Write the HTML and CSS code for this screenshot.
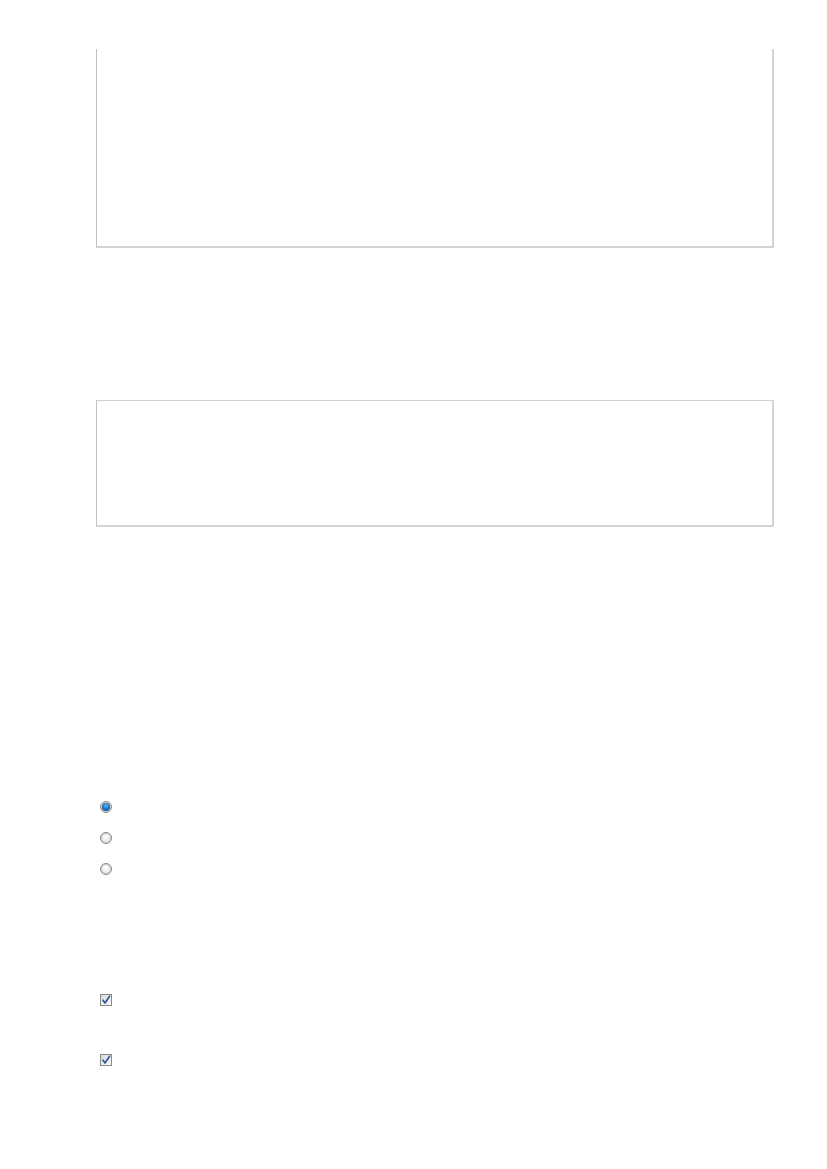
FILE: index.html
```html
<!DOCTYPE html>
<html>
<head>
<meta charset="utf-8">
<link rel="stylesheet" href="styles.css">
</head>
<body>
<div class="page">
  <div class="box box-top"></div>
  <div class="box box-mid"></div>
  <div class="radios">
    <div class="row"><span class="radio checked"><span class="dot"></span></span></div>
    <div class="row"><span class="radio"></span></div>
    <div class="row"><span class="radio"></span></div>
  </div>
  <div class="checks">
    <div class="crow"><span class="check"><svg viewBox="0 0 10 10" width="10" height="10"><path d="M2 5.2 L4 8 L8.6 1.2" fill="none" stroke="#2d4f9e" stroke-width="1.6" stroke-linecap="round" stroke-linejoin="round"/></svg></span></div>
    <div class="crow"><span class="check"><svg viewBox="0 0 10 10" width="10" height="10"><path d="M2 5.2 L4 8 L8.6 1.2" fill="none" stroke="#2d4f9e" stroke-width="1.6" stroke-linecap="round" stroke-linejoin="round"/></svg></span></div>
  </div>
</div>
</body>
</html>
```

FILE: styles.css
```css
html, body {
  margin: 0;
  padding: 0;
  background: #ffffff;
  font-family: "Liberation Sans", Arial, sans-serif;
}
.page {
  padding-left: 96px;
  width: 678px;
  display: flex;
  flex-direction: column;
}
.box {
  box-sizing: border-box;
  width: 678px;
  border-left: 1px solid #c0c0c0;
  border-top: 1px solid #d0d0d0;
  border-right: 2px solid #d4d4d4;
  border-bottom: 2px solid #d4d4d4;
  background: #fff;
}
.box-top {
  margin-top: 49px;
  height: 199px;
  border-top: none;
}
.box-mid {
  margin-top: 152px;
  height: 127px;
}
.radios {
  margin-top: 274px;
  display: flex;
  flex-direction: column;
  gap: 19px;
  padding-left: 4px;
}
.row {
  height: 12px;
  display: flex;
  align-items: center;
}
.radio {
  box-sizing: border-box;
  width: 12px;
  height: 12px;
  border-radius: 50%;
  border: 1px solid #8a8a8a;
  box-shadow: inset 0 0 0 1px #cfcfcf;
  background: radial-gradient(circle at 50% 40%, #ffffff 0%, #ececec 50%, #c4c4c4 100%);
  display: flex;
  align-items: center;
  justify-content: center;
}
.radio.checked {
  background: radial-gradient(circle, #f4f4f4 0%, #d8d8d8 100%);
}
.dot {
  width: 8px;
  height: 8px;
  border-radius: 50%;
  background: radial-gradient(circle at 50% 35%, #6cc2f0 0%, #1f7cc8 40%, #0b3a72 100%);
}
.checks {
  margin-top: 119px;
  display: flex;
  flex-direction: column;
  gap: 48px;
  padding-left: 4px;
}
.crow {
  height: 12px;
  display: flex;
  align-items: center;
}
.check {
  box-sizing: border-box;
  width: 12px;
  height: 12px;
  border: 1px solid #8a8a8a;
  background: linear-gradient(135deg, #d6d6d6 0%, #eeeeee 60%, #fafafa 100%);
  display: flex;
  align-items: center;
  justify-content: center;
}
.check svg {
  display: block;
}
```
